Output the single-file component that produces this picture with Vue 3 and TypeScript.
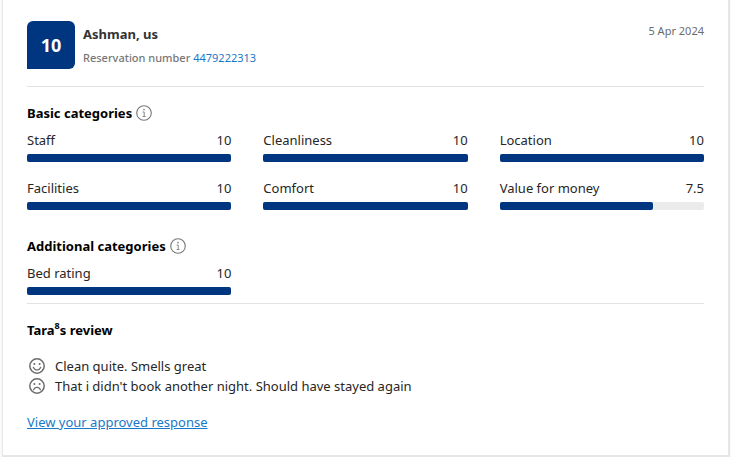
<script setup lang="ts">
interface Category {
  name: string
  score: number
}

interface CategoryGroup {
  title: string
  items: Category[]
}

const groups: CategoryGroup[] = [
  {
    title: 'Basic categories',
    items: [
      { name: 'Staff', score: 10 },
      { name: 'Cleanliness', score: 10 },
      { name: 'Location', score: 10 },
      { name: 'Facilities', score: 10 },
      { name: 'Comfort', score: 10 },
      { name: 'Value for money', score: 7.5 },
    ],
  },
  {
    title: 'Additional categories',
    items: [{ name: 'Bed rating', score: 10 }],
  },
]
</script>

<template>
  <main class="page">
    <article class="card">
      <header class="header">
        <div class="badge">10</div>
        <div class="guest">
          <h1 class="name">Ashman, us</h1>
          <p class="reservation"><span class="caption">Reservation number</span> <a href="#">4479222313</a></p>
        </div>
        <time class="date" datetime="2024-04-05">5 Apr 2024</time>
      </header>

      <div class="scores">
        <section v-for="group in groups" :key="group.title" class="group">
          <h2 class="heading">
            {{ group.title }}
            <svg class="info" viewBox="0 0 16 16" aria-hidden="true">
              <circle cx="8" cy="8" r="7.3" fill="none" stroke="#777" stroke-width="1.1" />
              <circle cx="8" cy="4.6" r="0.9" fill="#888" />
              <path d="M6.6 7H8.2V11.4M6.6 11.5H9.6" fill="none" stroke="#888" stroke-width="1" />
            </svg>
          </h2>
          <ul class="grid">
            <li v-for="item in group.items" :key="item.name" class="item">
              <div class="label">
                <span>{{ item.name }}</span>
                <span>{{ item.score }}</span>
              </div>
              <div class="track">
                <div class="fill" :style="{ width: item.score * 10 + '%' }"></div>
              </div>
            </li>
          </ul>
        </section>
      </div>

      <section class="review">
        <h2 class="heading">Tara<sup>8</sup>s review</h2>
        <div class="comments">
          <p class="comment">
            <svg class="face" viewBox="0 0 16 16" aria-hidden="true">
              <circle cx="8" cy="8" r="7.2" fill="none" stroke="#6b6b6b" stroke-width="1.5" />
              <circle cx="5.4" cy="6" r="1" fill="#6b6b6b" />
              <circle cx="10.6" cy="6" r="1" fill="#6b6b6b" />
              <path d="M4.3 9.3Q5.4 12 8 12T11.7 9.3" fill="none" stroke="#6b6b6b" stroke-width="1.2" stroke-linecap="round" />
            </svg>
            <span>Clean quite. Smells great</span>
          </p>
          <p class="comment">
            <svg class="face" viewBox="0 0 16 16" aria-hidden="true">
              <circle cx="8" cy="8" r="7.2" fill="none" stroke="#6b6b6b" stroke-width="1.5" />
              <circle cx="5.4" cy="6" r="1" fill="#6b6b6b" />
              <circle cx="10.6" cy="6" r="1" fill="#6b6b6b" />
              <path d="M4.6 11.8Q5.4 9.3 8 9.3T11.4 11.8" fill="none" stroke="#6b6b6b" stroke-width="1.2" stroke-linecap="round" />
            </svg>
            <span>That i didn't book another night. Should have stayed again</span>
          </p>
        </div>
        <a class="response" href="#">View your approved response</a>
      </section>
    </article>
  </main>
</template>

<style>
body {
  background: #fafafa;
}
</style>

<style scoped>
.page {
  padding: 0 1px 0 2px;
  font-family: "Noto Sans", "Open Sans", sans-serif;
  font-size: 13px;
  line-height: 20px;
  color: #262626;
}
.card {
  padding: 21px 24px 23px;
  border: solid #e6e6e6;
  border-width: 0 2px 2px 1px;
  background: #fff;
}
h1,
h2,
p,
ul {
  margin: 0;
  padding: 0;
}
.header {
  display: flex;
  gap: 8px;
  padding-bottom: 16px;
  border-bottom: 1px solid #e2e2e2;
}
.badge {
  display: flex;
  align-items: center;
  justify-content: center;
  width: 48px;
  height: 48px;
  border-radius: 6px 6px 6px 0;
  background: #003580;
  color: #fff;
  font-size: 18px;
  font-weight: 700;
}
.guest {
  flex: 1;
  padding-top: 2px;
}
.name {
  font-size: 13px;
  font-weight: 700;
  line-height: 22px;
  color: #333;
}
.reservation {
  font-size: 11px;
  line-height: 25px;
}
.caption {
  font-weight: 500;
  color: #777;
}
a {
  color: #1a78c8;
  text-decoration: none;
}
.date {
  font-size: 11px;
  color: #6b6b6b;
}
.scores {
  display: grid;
  gap: 26px;
  padding: 16px 0 8px;
  border-bottom: 1px solid #e2e2e2;
}
.heading {
  display: flex;
  align-items: center;
  font-size: 13px;
  font-weight: 700;
  color: #000;
}
.heading sup {
  align-self: flex-start;
  font-size: 9px;
  line-height: 12px;
}
.info {
  width: 16px;
  height: 16px;
  margin-left: 4px;
}
.grid {
  display: grid;
  grid-template-columns: repeat(3, 1fr);
  gap: 16px 32px;
  margin-top: 7px;
  list-style: none;
}
.label {
  display: flex;
  justify-content: space-between;
  margin-bottom: 4px;
}
.track {
  height: 8px;
  border-radius: 2px;
  background: #ebebeb;
}
.fill {
  height: 100%;
  border-radius: 2px;
  background: #003580;
}
.review {
  display: grid;
  justify-items: start;
  gap: 16px;
  padding-top: 16px;
}
.comment {
  display: flex;
  align-items: center;
  gap: 10px;
  padding-left: 2px;
}
.face {
  flex: none;
  width: 16px;
  height: 16px;
}
.response {
  text-decoration: underline;
}
</style>
